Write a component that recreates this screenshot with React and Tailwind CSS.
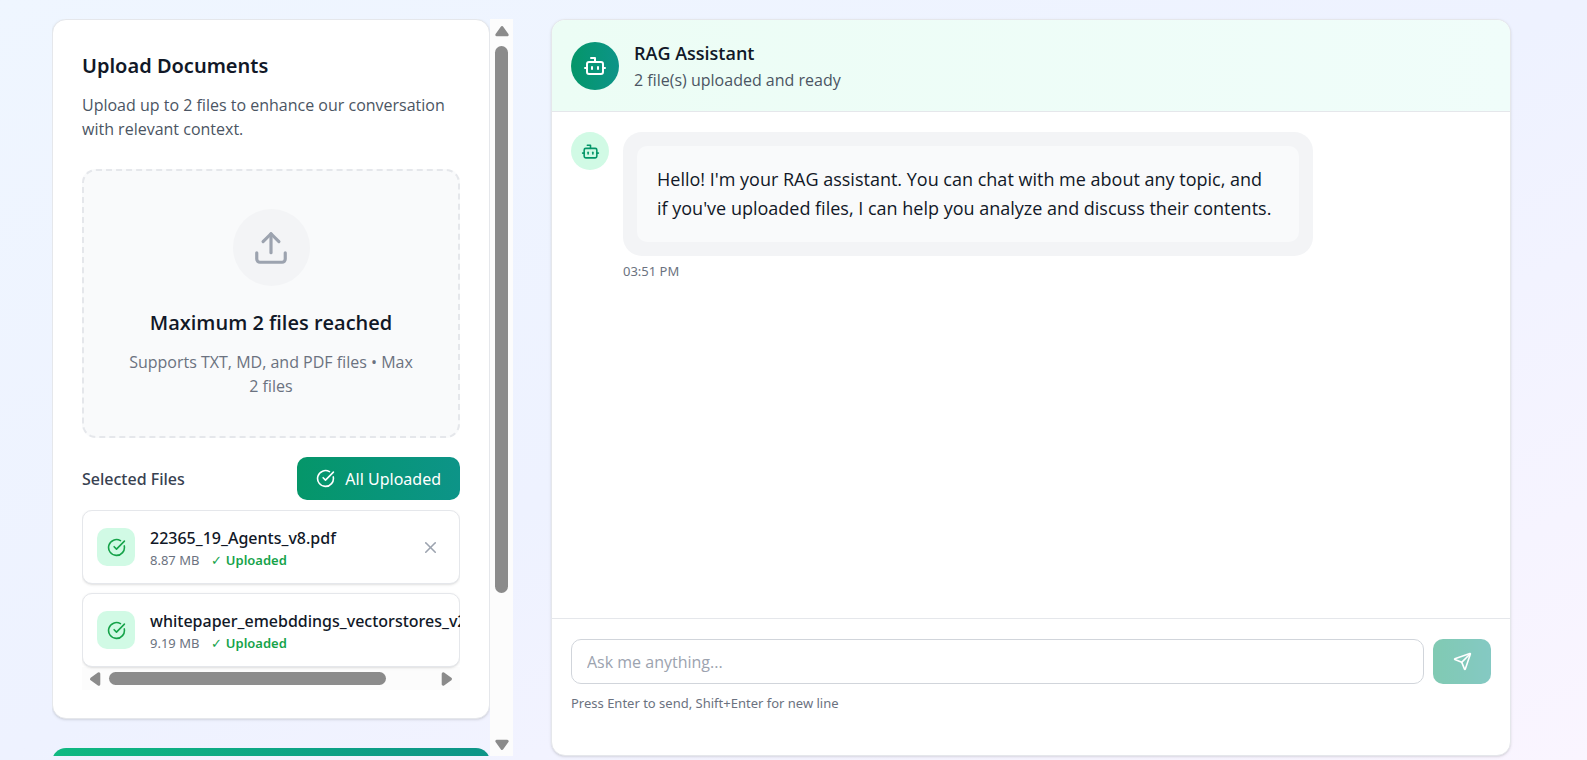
import { Upload, Bot, Send, X, CircleCheckBig } from "lucide-react";

const files = [
  { name: "22365_19_Agents_v8.pdf", size: "8.87 MB" },
  { name: "whitepaper_emebddings_vectorstores_v2.pdf", size: "9.19 MB" },
];

function Arrow({ className }) {
  return (
    <svg viewBox="0 0 16 12" className={className} fill="#8b8b8b" stroke="#8b8b8b" strokeWidth="3" strokeLinejoin="round" aria-hidden="true">
      <path d="M8 2.5 13.2 9.8H2.8Z" />
    </svg>
  );
}

function FileCard({ file }) {
  return (
    <li className="flex items-center gap-[15px] rounded-[10px] border border-[#e5e7eb] bg-white p-[14px] shadow-sm">
      <div className="flex size-[38px] shrink-0 items-center justify-center rounded-[10px] bg-[#d1fae5]">
        <CircleCheckBig className="size-[19px] text-[#16a34a]" />
      </div>
      <div className="shrink-0 grow whitespace-nowrap">
        <p className="font-['Noto_Sans',sans-serif] text-[16px] leading-[26px] font-medium text-[#111827]">{file.name}</p>
        <p className="flex gap-3 font-['Noto_Sans',sans-serif] text-[13px] leading-[18px] text-[#6b7280]">
          <span>{file.size}</span>
          <span className="font-semibold text-[#16a34a]">
            <span className="font-normal">✓</span> Uploaded
          </span>
        </p>
      </div>
      <button type="button" aria-label={`Remove ${file.name}`} className="shrink-0 p-[5px] text-[#9ca3af]">
        <X className="size-[19px]" />
      </button>
    </li>
  );
}

function UploadPanel() {
  return (
    <section className="rounded-[14px] border border-[#e5e7eb] bg-white px-[29px] py-7 shadow-sm">
      <h2 className="font-['Noto_Sans',sans-serif] text-[20px] leading-9 font-semibold text-[#111827]">Upload Documents</h2>
      <p className="mt-[9px] text-[16px] leading-6 text-[#4b5563]">
        Upload up to 2 files to enhance our conversation with relevant context.
      </p>
      <div className="mt-7 flex flex-col items-center rounded-[14px] border-2 border-dashed border-[#e5e7eb] bg-[#f9fafb] px-[43px] py-[38px] text-center">
        <div className="flex size-[77px] items-center justify-center rounded-full bg-[#f3f4f6]">
          <Upload className="size-[38px] text-[#9ca3af]" />
        </div>
        <h3 className="mt-[19px] text-[20px] leading-[35px] font-semibold text-[#111827]">Maximum 2 files reached</h3>
        <p className="mt-2.5 text-[16px] leading-6 text-[#6b7280]">Supports TXT, MD, and PDF files • Max 2 files</p>
      </div>
      <div className="mt-[19px] flex items-center justify-between">
        <h4 className="font-['Noto_Sans',sans-serif] text-[16px] leading-6 font-medium text-[#374151]">Selected Files</h4>
        <button type="button" className="flex h-[43px] items-center gap-2.5 rounded-[10px] bg-linear-to-r from-[#059669] to-[#0d9488] px-[19px] font-['Noto_Sans',sans-serif] text-[16px] text-white">
          <CircleCheckBig className="size-[19px]" />
          All Uploaded
        </button>
      </div>
      <div className="mt-2.5 overflow-hidden">
        <ul className="flex flex-col gap-[9px]">
          {files.map((file) => (
            <FileCard key={file.name} file={file} />
          ))}
        </ul>
        <div className="flex h-[23px] items-center justify-between bg-[#fcfcfc] px-[5px]">
          <Arrow className="h-3 w-4 -rotate-90" />
          <div className="ml-1.5 flex-1">
            <div className="h-[13px] w-[84%] rounded-full bg-[#8b8b8b]" />
          </div>
          <Arrow className="h-3 w-4 rotate-90" />
        </div>
      </div>
    </section>
  );
}

function ChatPanel() {
  return (
    <main className="col-span-2 flex min-h-0 flex-col overflow-hidden rounded-[14px] border border-[#e5e7eb] bg-white shadow-sm">
      <header className="flex items-center gap-[15px] border-b border-[#e5e7eb] bg-linear-to-r from-[#ecfdf5] to-[#f0fdfa] p-[19px]">
        <div className="flex size-12 items-center justify-center rounded-full bg-linear-to-r from-[#059669] to-[#0d9488]">
          <Bot className="size-6 text-white" />
        </div>
        <div>
          <h1 className="text-[18px] leading-[29px] font-semibold text-[#111827]">RAG Assistant</h1>
          <p className="text-[16px] leading-6 text-[#4b5563]">2 file(s) uploaded and ready</p>
        </div>
      </header>
      <div className="flex flex-1 items-start gap-[14px] px-[19px] py-5">
        <div className="flex size-[38px] shrink-0 items-center justify-center rounded-full bg-[#d1fae5]">
          <Bot className="size-[19px] text-[#059669]" />
        </div>
        <div className="w-3/4">
          <div className="rounded-[19px] bg-[#f3f4f6] p-[14px]">
            <p className="rounded-[10px] bg-[#f9fafb] px-5 py-[19px] text-[18px] leading-[29px] text-[#111827]">
              Hello! I'm your RAG assistant. You can chat with me about any topic, and
              <br />
              if you've uploaded files, I can help you analyze and discuss their contents.
            </p>
          </div>
          <time className="mt-1.5 block font-['Noto_Sans',sans-serif] text-[13px] leading-[19px] text-[#6b7280]">03:51 PM</time>
        </div>
      </div>
      <form className="border-t border-[#e5e7eb] px-[19px] pt-5 pb-[42px]">
        <div className="flex gap-[9px]">
          <input
            type="text"
            aria-label="Message"
            placeholder="Ask me anything..."
            className="h-[45px] min-w-0 flex-1 rounded-[10px] border border-[#d1d5db] px-[15px] text-[16px] placeholder:text-[#9ca3af]"
          />
          <button type="button" aria-label="Send message" className="flex w-[58px] items-center justify-center rounded-[10px] bg-linear-to-r from-[#059669] to-[#0d9488] text-white opacity-50">
            <Send className="size-[19px]" />
          </button>
        </div>
        <p className="mt-2.5 font-['Noto_Sans',sans-serif] text-[13px] leading-[19px] text-[#6b7280]">
          Press Enter to send, Shift+Enter for new line
        </p>
      </form>
    </main>
  );
}

export default function App() {
  return (
    <div className="grid h-screen grid-cols-3 grid-rows-1 gap-[38px] bg-linear-to-br from-[#eff6ff] via-[#eef2ff] to-[#faf5ff] pt-[19px] pr-[76px] pb-1 pl-[52px] font-['Open_Sans',sans-serif]">
      <aside className="flex min-h-0">
        <div className="flex min-w-0 flex-1 flex-col gap-[29px] overflow-hidden">
          <UploadPanel />
          <section className="min-h-[120px] shrink-0 rounded-[14px] bg-linear-to-r from-[#10b981] to-[#0d9488]" />
        </div>
        <div className="flex w-[23px] shrink-0 flex-col items-center bg-[#fcfcfc] pt-1.5 pb-[5px]">
          <Arrow className="h-3 w-4" />
          <div className="mt-[9px] flex-1">
            <div className="h-[79%] w-[13px] rounded-full bg-[#8b8b8b]" />
          </div>
          <Arrow className="h-3 w-4 rotate-180" />
        </div>
      </aside>
      <ChatPanel />
    </div>
  );
}
